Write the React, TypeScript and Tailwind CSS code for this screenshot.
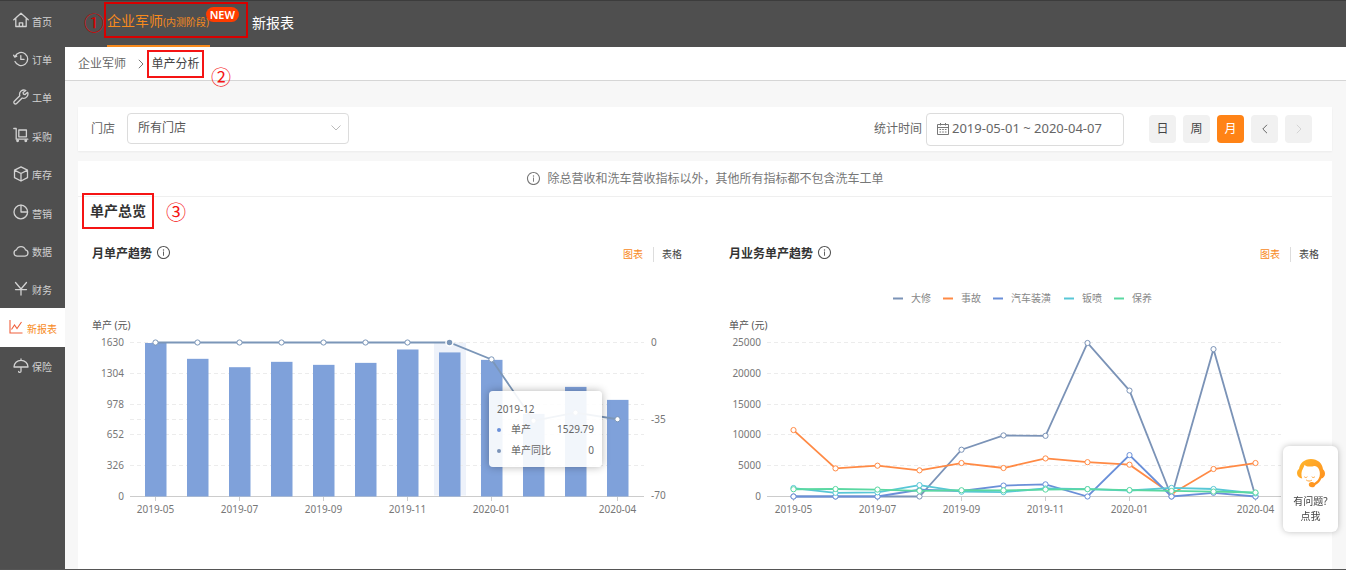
import React, { useState } from 'react';
import { AiOutlineInfoCircle } from 'react-icons/ai';

const MONTHS = [
  '2019-05', '2019-06', '2019-07', '2019-08', '2019-09', '2019-10',
  '2019-11', '2019-12', '2020-01', '2020-02', '2020-03', '2020-04',
];

// months that get a label and a tick on the x axis
const LABELED = [0, 2, 4, 6, 8, 11];

const OUTPUT = [1630, 1462, 1373, 1430, 1398, 1419, 1561, 1530, 1451, 877, 1164, 1026];
const OUTPUT_YOY = [0, 0, 0, 0, 0, 0, 0, 0, -7.7, -35.7, -32, -35];

const SERIES = [
  { name: '大修', color: '#7b93b7', x: 164, values: [0, 0, 0, 0, 7620, 9950, 9880, 25000, 17250, 0, 24000, 0] },
  { name: '事故', color: '#ff8a45', x: 214, values: [10820, 4580, 5020, 4260, 5450, 4640, 6200, 5590, 5180, 400, 4480, 5450] },
  { name: '汽车装潢', color: '#6a8fd8', x: 264, values: [0, 0, 0, 1100, 900, 1780, 1980, 0, 6740, 0, 600, 0] },
  { name: '钣喷', color: '#58c7d6', x: 335, values: [1380, 600, 680, 1850, 780, 720, 1300, 1200, 980, 1400, 1220, 500] },
  { name: '保养', color: '#5ad8a2', x: 385, values: [1180, 1220, 1130, 920, 1020, 1000, 1130, 1200, 1050, 900, 800, 650] },
];

const STEP = 42;
const TOP = 72;
const BOTTOM = 226;

const NavIcon: React.FC<{ children: React.ReactNode }> = ({ children }) => (
  <svg viewBox="0 0 16 16" className="size-4 shrink-0" fill="none" stroke="currentColor" strokeWidth="1.3" strokeLinejoin="round" strokeLinecap="round">
    {children}
  </svg>
);

const NAV_ITEMS = [
  {
    label: '首页',
    icon: <NavIcon><path d="M.8 7.800 8 1.200l7.200 6.600M2.800 6.300v8.200h10.400V6.300M6.300 14.200v-3.400h3.400v3.400" /></NavIcon>,
  },
  {
    label: '订单',
    icon: <NavIcon><path d="M2.100 5.200A6.600 6.600 0 1 1 2 10.600M.6 4.200l1.200 1.900 2-.9M7.800 4.600v3.800h3.200" /></NavIcon>,
  },
  {
    label: '工单',
    icon: <NavIcon><path d="M12.800 1.500a4.300 4.300 0 0 0-6 5.200L1.300 12.200a1.500 1.500 0 0 0 2.300 2.300L9.200 9a4.300 4.300 0 0 0 5.400-5.700l-2.500 2.300-1.700-.4-.3-1.600z" /></NavIcon>,
  },
  {
    label: '采购',
    icon: (
      <NavIcon>
        <path d="M.8 1.500h2.400v10.700h11.600M5.800 3h7.600v6.800H5.800z" />
        <circle cx="4.600" cy="13.800" r=".8" />
        <circle cx="12.800" cy="13.800" r=".8" />
      </NavIcon>
    ),
  },
  {
    label: '库存',
    icon: <NavIcon><path d="M8 .9 14.500 4.100v7.600L8 15l-6.500-3.300V4.100zM1.500 4.100 8 7.500l6.500-3.400M8 7.500V15" /></NavIcon>,
  },
  {
    label: '营销',
    icon: <NavIcon><circle cx="7.800" cy="8" r="6.800" /><path d="M8 1.200V8h6.500" /></NavIcon>,
  },
  {
    label: '数据',
    icon: <NavIcon><path d="M4 13.200a3.200 3.200 0 0 1-.5-6.300 4.700 4.700 0 0 1 9-0 3.200 3.200 0 0 1-.5 6.300z" /></NavIcon>,
  },
  {
    label: '财务',
    icon: <NavIcon><path d="M2.500 1.500 8 8l5.500-6.500M8 8v6M2.500 8.600h11" /></NavIcon>,
  },
  {
    label: '新报表',
    icon: (
      <svg viewBox="0 0 14 14" className="size-3.5 shrink-0" fill="none" stroke="#f0603c" strokeWidth="1.1">
        <path d="M1 0v13h12.500M2.500 9.500 5.500 5l2.500 3.500L12.500 2" />
      </svg>
    ),
    active: true,
  },
  {
    label: '保险',
    icon: <NavIcon><path d="M8 1v1.400M1 9c0-4 3.100-6.600 7-6.600S15 5 15 9zM8 9v4.200c0 1.600-2.400 1.600-2.400.2" /></NavIcon>,
  },
];

const Sidebar: React.FC = () => (
  <aside className="w-[65px] shrink-0 bg-[#4f4f4f]">
    <nav className="grid h-96 auto-rows-fr">
      {NAV_ITEMS.map((item) => (
        <a
          key={item.label}
          href="#"
          className={`flex items-center text-[10px] ${
            item.active ? 'gap-1 bg-white pl-[9px] text-[#f78a1d]' : 'gap-[3px] pl-[13px] text-[#d2d2d2]'
          }`}
        >
          {item.icon}
          <span className="pt-1">{item.label}</span>
        </a>
      ))}
    </nav>
  </aside>
);

const Header: React.FC = () => (
  <header className="flex h-[46px] items-start bg-[#4f4f4f] pl-[19px] pt-px">
    <span className="w-5 pt-3 text-center text-xl leading-5 text-[#d80000]">①</span>
    <div className="relative flex h-9 w-36 items-center border-2 border-[#d80000] pl-px pt-0.5">
      <a href="#" className="text-sm text-[#f78a1d]">
        企业军师<span className="text-[10px]">(内测阶段)</span>
      </a>
      <span className="absolute right-[7px] top-[3px] rounded-full bg-[#ff3c00] px-1 text-[11px] font-semibold leading-[15px] text-white">
        NEW
      </span>
      <span className="absolute -bottom-[11px] left-px h-0.5 w-[103px] bg-[#f78a1d]" />
    </div>
    <a href="#" className="pl-1 pt-[11px] text-sm leading-5 text-white">新报表</a>
  </header>
);

const Breadcrumb: React.FC = () => (
  <div className="flex h-[34px] items-center border-b border-[#d6d6d6] bg-white pl-[13px] text-xs text-[#666]">
    <a href="#">企业军师</a>
    <svg viewBox="0 0 6 10" className="ml-3 mr-[3px] h-2.5 w-1.5" fill="none" stroke="#777">
      <path d="M.8.8 5 5 .8 9.2" />
    </svg>
    <div className="relative flex h-7 w-[57px] items-center justify-center border-2 border-[#f51414]">
      <span className="whitespace-nowrap text-[#444]">单产分析</span>
      <span className="absolute -right-[29px] top-4 text-xl leading-5 text-[#f51414]">②</span>
    </div>
  </div>
);

const PERIODS = ['日', '周', '月'];

const FilterBar: React.FC = () => {
  const [period, setPeriod] = useState('月');
  const [range, setRange] = useState('2019-05-01 ~ 2020-04-07');

  return (
    <div className="flex h-11 items-center bg-white pl-[13px] pr-5 text-xs text-[#666] shadow-xs">
      <label htmlFor="store">门店</label>
      <div className="relative ml-3 w-[222px] pb-0.5">
        <select id="store" className="block h-[31px] w-full appearance-none rounded border border-[#dcdcdc] bg-white pl-2.5 text-xs text-[#555]">
          <option>所有门店</option>
        </select>
        <svg viewBox="0 0 10 6" className="pointer-events-none absolute right-2 top-3 h-1.5 w-2.5" fill="none" stroke="#bbb">
          <path d="M.5.5 5 5 9.5.5" />
        </svg>
      </div>
      <label htmlFor="range" className="ml-auto">统计时间</label>
      <div className="ml-1 flex h-[33px] w-[198px] items-center rounded border border-[#dcdcdc] pl-2.5">
        <svg viewBox="0 0 12 12" className="size-3 shrink-0" fill="none" stroke="#777">
          <path d="M.5 1.500h11v10H.5zM.5 4.500h11M3.500 0v2.500M8.500 0v2.500" />
          <path d="M2.500 6.500h7M2.500 9h7" strokeDasharray="1.600 1.100" />
        </svg>
        <input
          id="range"
          type="text"
          value={range}
          onChange={(e) => setRange(e.target.value)}
          className="ml-[3px] w-full min-w-0 text-[13px] text-[#666] outline-none"
        />
      </div>
      <div className="ml-[25px] flex gap-[7px]">
        {PERIODS.map((p) => (
          <button
            key={p}
            type="button"
            onClick={() => setPeriod(p)}
            className={`h-7 w-[27px] rounded ${p === period ? 'bg-[#ff8316] text-white' : 'bg-[#f1f1f1] text-[#444]'}`}
          >
            {p}
          </button>
        ))}
        <button type="button" aria-label="上一页" className="flex h-7 w-[27px] items-center justify-center rounded bg-[#f1f1f1]">
          <svg viewBox="0 0 6 10" className="h-2.5 w-1.5" fill="none" stroke="#666">
            <path d="M5 .8.8 5 5 9.2" />
          </svg>
        </button>
        <button type="button" aria-label="下一页" disabled className="flex h-7 w-[27px] items-center justify-center rounded bg-[#f1f1f1]">
          <svg viewBox="0 0 6 10" className="h-2.5 w-1.5" fill="none" stroke="#d4d4d4">
            <path d="M.8.8 5 5 .8 9.2" />
          </svg>
        </button>
      </div>
    </div>
  );
};

interface AxisProps {
  x1: number;
  x2: number;
  first: number;
  labels: number[];
}

const Axis: React.FC<AxisProps> = ({ x1, x2, first, labels }) => (
  <g>
    <text x="0" y="58" fill="#555">单产 (元)</text>
    {labels.map((label, i) => {
      const y = Math.round(TOP + ((BOTTOM - TOP) * i) / (labels.length - 1)) - 0.5;
      return (
        <g key={label}>
          <text x={x1 - 6} y={y + 3} textAnchor="end" fill="#777">{label}</text>
          {label !== 0 && <line x1={x1} x2={x2} y1={y} y2={y} stroke="#ececec" strokeDasharray="4 3" />}
        </g>
      );
    })}
    <line x1={x1} x2={x2} y1={BOTTOM - 0.5} y2={BOTTOM - 0.5} stroke="#ccc" />
    {LABELED.map((i) => (
      <g key={i}>
        <line x1={first + STEP * i} x2={first + STEP * i} y1={BOTTOM} y2={BOTTOM + 4} stroke="#ccc" />
        <text x={first + STEP * i} y={BOTTOM + 16} textAnchor="middle" fill="#777">{MONTHS[i]}</text>
      </g>
    ))}
  </g>
);

interface LineProps {
  values: number[];
  toY: (v: number) => number;
  first: number;
  color: string;
  active?: number;
}

const Line: React.FC<LineProps> = ({ values, toY, first, color, active }) => (
  <g>
    <polyline points={values.map((v, i) => `${first + STEP * i},${toY(v)}`).join(' ')} fill="none" stroke={color} strokeWidth="1.8" />
    {values.map((v, i) =>
      i === active ? (
        <circle key={i} cx={first + STEP * i} cy={toY(v)} r="3.5" fill={color} stroke="#fff" strokeWidth="1.5" />
      ) : (
        <circle key={i} cx={first + STEP * i} cy={toY(v)} r="2.6" fill="#fff" stroke={color} />
      )
    )}
  </g>
);

const OutputChart: React.FC = () => {
  const first = 63.5;
  const toY = (v: number) => BOTTOM - 0.5 - (v / 1630) * 153.5;
  return (
    <svg viewBox="0 0 590 252" className="h-auto w-full text-[10px]">
      <rect x="342" y={TOP - 0.5} width="32" height="153" fill="#eef2fa" />
      <Axis x1={38} x2={552} first={first} labels={[1630, 1304, 978, 652, 326, 0]} />
      <line x1="38" x2="552" y1="148.5" y2="148.5" stroke="#ececec" strokeDasharray="4 3" />
      {OUTPUT.map((v, i) => (
        <rect key={i} x={first + STEP * i - 10.5} y={toY(v)} width="21.5" height={BOTTOM - 0.5 - toY(v)} fill="#7fa1da" />
      ))}
      <Line values={OUTPUT_YOY} toY={(v) => TOP - 0.5 - (v / 70) * 153.5} first={first} color="#7b96b8" active={7} />
      <g fill="#777">
        <text x="559" y="75">0</text>
        <text x="559" y="152">-35</text>
        <text x="559" y="228">-70</text>
      </g>
    </svg>
  );
};

const BusinessChart: React.FC = () => {
  const first = 64.5;
  return (
    <svg viewBox="0 0 590 252" className="h-auto w-full text-[10px]">
      {SERIES.map((s) => (
        <g key={s.name}>
          <line x1={s.x} x2={s.x + 10} y1="27.5" y2="27.5" stroke={s.color} strokeWidth="2" />
          <text x={s.x + 18} y="31" fill="#888">{s.name}</text>
        </g>
      ))}
      <Axis x1={38} x2={552} first={first} labels={[25000, 20000, 15000, 10000, 5000, 0]} />
      {SERIES.map((s) => (
        <Line key={s.name} values={s.values} toY={(v) => BOTTOM - 0.5 - (v / 25000) * 153.5} first={first} color={s.color} />
      ))}
    </svg>
  );
};

const ChartTooltip: React.FC = () => (
  <div className="absolute left-[397px] top-[120px] w-[113px] rounded-sm bg-white/90 px-2 pb-1.5 pt-2 text-[10px] text-[#666] shadow-[0_0_8px_rgba(0,0,0,0.3)]">
    <div className="h-5 leading-5">2019-12</div>
    <div className="flex h-[21px] items-center">
      <span className="mr-2.5 size-1 rounded-full bg-[#6a8fd8]" />
      单产<span className="ml-auto">1529.79</span>
    </div>
    <div className="flex h-[21px] items-center">
      <span className="mr-2.5 size-1 rounded-full bg-[#7b93b7]" />
      单产同比<span className="ml-auto">0</span>
    </div>
  </div>
);

interface ChartPanelProps {
  title: string;
  children: React.ReactNode;
}

const ChartPanel: React.FC<ChartPanelProps> = ({ title, children }) => (
  <div>
    <div className="flex h-[34px] items-center">
      <h3 className="text-xs font-bold text-[#333]">{title}</h3>
      <AiOutlineInfoCircle className="mb-1 ml-1 size-[15px] text-[#555]" />
      <div className="ml-auto flex items-center text-[10px]">
        <button type="button" className="pr-2.5 text-[#f78a1d]">图表</button>
        <button type="button" className="border-l border-[#ddd] pl-2 text-[#444]">表格</button>
      </div>
    </div>
    <div className="relative">{children}</div>
  </div>
);

const HelpCard: React.FC = () => (
  <button type="button" className="fixed bottom-[38px] right-2 flex h-[86px] w-[55px] flex-col items-center rounded-md bg-white pt-3 text-[10px] leading-[15px] text-[#444] shadow-[0_0_6px_rgba(0,0,0,0.25)]">
    <svg viewBox="0 0 30 30" className="mb-1.5 size-[30px]">
      <defs>
        <linearGradient id="hair" x1="0" y1="0" x2="1" y2="1">
          <stop offset="0" stopColor="#ffb92e" />
          <stop offset="1" stopColor="#ff8a1c" />
        </linearGradient>
      </defs>
      <path
        d="M15 1C8.500 1 3.700 5.200 3 11 1.700 12 1 13.500 1 15.200c.1 2.900 2.200 5 5.200 5.300C5 17 5.200 13.500 7 10.500c.7-1.300 1.300-2.400 1.600-3.700 1 1.200 2 1.700 3.400 1.600 2-.1 3.400.2 5.400-.2 2.600-.5 4.600 1 5.600 3.200 1.300 3 1.200 6.200-.3 9.200-1 2-2.500 3.400-4.500 4.300-.6-.8-1.500-1.100-2.600-1-1.700.1-2.800 1.100-2.800 2.600 0 1.700 1.300 2.700 3.300 2.700 1.700 0 2.900-.8 3.300-2.300 2.900-1.200 4.900-3.300 5.900-6.300 2.200-.6 3.700-2.400 3.700-4.800 0-1.800-.7-3.500-2-4.600C26.300 5.200 21.500 1 15 1z"
        fill="url(#hair)"
      />
      <path d="M8.500 19c.6.8 1.800.8 2.600 0M16 19c.7.8 1.900.8 2.600 0M10.500 22.200c1.600 1.200 3.400 1.200 5 .2" fill="none" stroke="#ffa53a" strokeLinecap="round" />
    </svg>
    <span>有问题?</span>
    <span>点我</span>
  </button>
);

export default function App() {
  return (
    <div className="flex min-h-screen border-b border-t border-b-[#555] border-t-[#3c3c3c] bg-[#f7f7f7] font-['Noto_Sans','Noto_Sans_CJK_SC',sans-serif]">
      <Sidebar />
      <div className="flex min-w-0 flex-1 flex-col">
        <Header />
        <Breadcrumb />
        <main className="flex flex-1 flex-col gap-2.5 pl-[13px] pr-[14px] pt-[26px]">
          <FilterBar />
          <section className="flex-1 bg-white">
            <p className="flex h-9 items-center justify-center gap-1.5 border-b border-[#efefef] text-xs text-[#777]">
              <AiOutlineInfoCircle className="size-[15px]" />
              除总营收和洗车营收指标以外，其他所有指标都不包含洗车工单
            </p>
            <div className="-mt-1 flex items-center pl-1">
              <h2 className="flex h-9 w-[72px] items-center justify-center border-2 border-[#f51414] text-sm font-bold text-[#333]">
                单产总览
              </h2>
              <span className="ml-3 pt-1 text-xl leading-5 text-[#f51414]">③</span>
            </div>
            <div className="grid grid-cols-2 gap-[47px] pl-[14px] pr-[13px] pt-2">
              <ChartPanel title="月单产趋势">
                <OutputChart />
                <ChartTooltip />
              </ChartPanel>
              <ChartPanel title="月业务单产趋势">
                <BusinessChart />
              </ChartPanel>
            </div>
          </section>
        </main>
      </div>
      <HelpCard />
    </div>
  );
}
